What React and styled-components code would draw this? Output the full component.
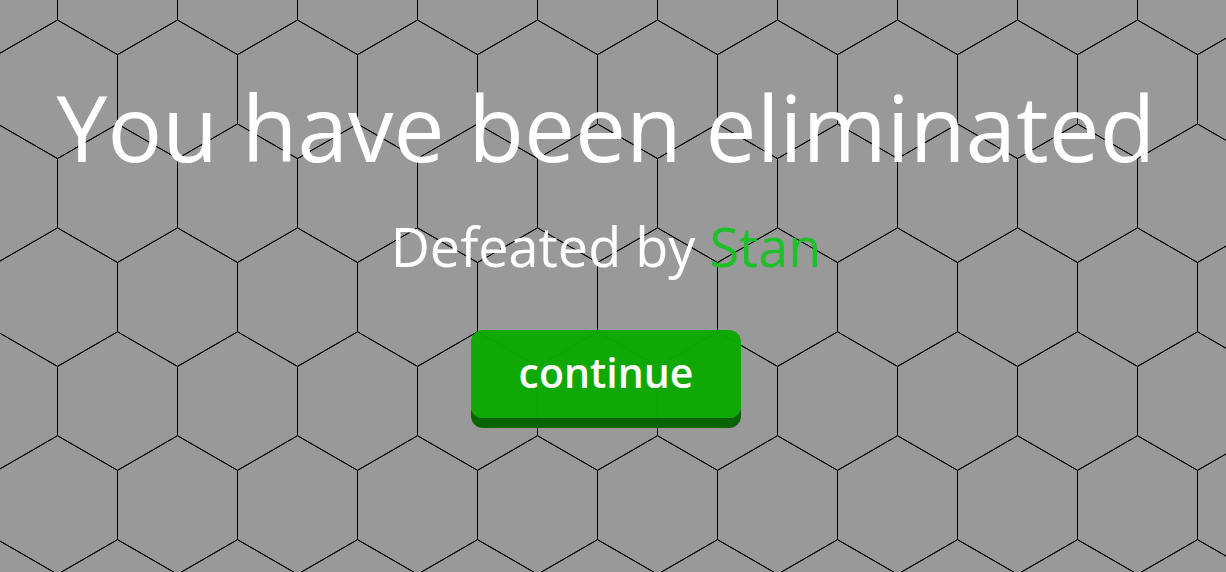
import React from 'react';
import styled, { createGlobalStyle } from 'styled-components';

const SIDE = 120 / Math.sqrt(3);
const ROW = SIDE * 1.5;

const GlobalStyle = createGlobalStyle`
  html, body {
    margin: 0;
    padding: 0;
    background: #999999;
  }
  body {
    font-family: 'Open Sans', 'Noto Sans', sans-serif;
  }
`;

const Screen = styled.div`
  position: relative;
  width: 100vw;
  height: 100vh;
  overflow: hidden;
  background: #999999;
`;

const Grid = styled.svg`
  position: absolute;
  inset: 0;
  width: 100%;
  height: 100%;
`;

const Content = styled.div`
  position: relative;
  display: flex;
  flex-direction: column;
  align-items: center;
  padding: 73px 14px 0 0;
`;

const Title = styled.h1`
  margin: 0;
  color: #fff;
  font-size: 91px;
  font-weight: 400;
  line-height: 1.2;
  white-space: nowrap;
`;

const Subtitle = styled.h2`
  margin: 32px 0 0;
  color: #fff;
  font-size: 54px;
  font-weight: 400;
  line-height: 1.2;
`;

const Killer = styled.span`
  color: #1ec02a;
`;

const ContinueButton = styled.button`
  margin-top: 51px;
  width: 270px;
  height: 88px;
  padding: 0 0 4px;
  border: none;
  border-radius: 12px;
  background: rgba(10, 168, 0, 0.97);
  box-shadow: 0 10px 0 rgba(6, 100, 0, 0.98);
  color: #fff;
  font-family: inherit;
  font-size: 41px;
  font-weight: 600;
  cursor: pointer;
`;

function hexPath(cx, cy) {
  const pts = [];
  for (let i = 0; i < 6; i++) {
    const a = (Math.PI / 180) * (60 * i - 90);
    pts.push(`${(cx + SIDE * Math.cos(a)).toFixed(2)},${(cy + SIDE * Math.sin(a)).toFixed(2)}`);
  }
  return `M${pts.join('L')}Z`;
}

// pointy-top hex board drawn behind everything
const HexField = () => {
  const parts = [];
  for (let r = -1; r < 7; r++) {
    const cy = 89.3 + r * ROW;
    const startX = r % 2 === 0 ? 57.5 : -2.5;
    for (let c = -1; c < 12; c++) {
      parts.push(hexPath(startX + c * 120, cy));
    }
  }
  return (
    <Grid>
      <path d={parts.join('')} fill="none" stroke="#000" strokeWidth="1" />
    </Grid>
  );
};

export default function App() {
  return (
    <Screen>
      <GlobalStyle />
      <HexField />
      <Content>
        <Title>You have been eliminated</Title>
        <Subtitle>
          Defeated by <Killer>Stan</Killer>
        </Subtitle>
        <ContinueButton>continue</ContinueButton>
      </Content>
    </Screen>
  );
}
